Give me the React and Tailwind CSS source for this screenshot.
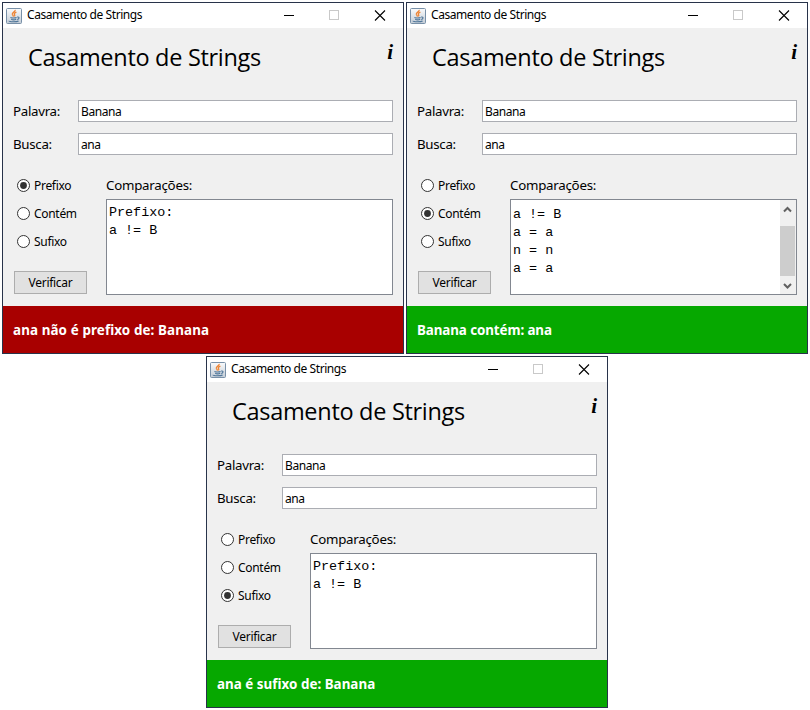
import React from "react";

function JavaIcon() {
  return (
    <svg width="16" height="16" viewBox="0 0 16 16" className="ml-[3px] shrink-0">
      <defs>
        <linearGradient id="tile" x1="0" y1="0" x2="0" y2="1">
          <stop offset="0" stopColor="#fafbfc" />
          <stop offset="1" stopColor="#c3ccd6" />
        </linearGradient>
      </defs>
      <rect x="0.5" y="0.5" width="15" height="15" rx="1" fill="url(#tile)" stroke="#7890a8" />
      <path d="M9.2 1.8C9.6 3.8 6 4.4 6.3 6.2C6.5 7 7.4 7.4 7.5 8.6M10.4 4.2C8.4 5 7.9 5.8 8.6 6.7C9 7.3 8.8 7.8 8.4 8.4" fill="none" stroke="#ee8535" strokeWidth="1.3" />
      <path d="M4.6 9.3C4.4 10.2 9.3 10.1 10.6 9.4M5.2 11.3C6.5 12 9 11.9 10.2 11.3M3 12.8C2.8 14.1 10.7 14.1 12.6 12.9M11.2 9.1C13.8 8.5 13.4 11 11.3 11.6" fill="none" stroke="#4f7699" strokeWidth="1.15" />
    </svg>
  );
}

function TitleBar() {
  return (
    <div className="flex h-[25px] shrink-0 items-center bg-white">
      <JavaIcon />
      <span className="-mt-px ml-[5px] text-[12px] leading-[16px] tracking-[-0.43px]">Casamento de Strings</span>
      <svg width="102" height="11" viewBox="0 0 102 11" className="mr-[17px] ml-auto" fill="none" shapeRendering="crispEdges">
        <path d="M0 5.5H10" stroke="#000" />
        <rect x="45.5" y="0.5" width="9" height="9" stroke="#c9c9c9" />
        <path d="M91 0.5L101 10.5M101 0.5L91 10.5" stroke="#000" shapeRendering="auto" strokeWidth="1.1" />
      </svg>
    </div>
  );
}

function Field({ label, value }) {
  return (
    <div className="flex h-[22px] items-center">
      <span className="w-[65px] text-[13.3px] leading-[18px] tracking-[-0.3px]">{label}</span>
      <div className="flex h-[22px] w-[315px] items-center border border-[#abadb3] bg-white pt-px pl-[2px] text-[12px] leading-[16px] tracking-[-0.4px]">
        {value}
      </div>
    </div>
  );
}

function Radio({ label, checked }) {
  return (
    <div className="flex h-[28px] items-center pl-1">
      <svg width="13" height="13" viewBox="0 0 13 13">
        <circle cx="6.5" cy="6.5" r="6" fill="#fff" stroke="#333" />
        {checked && <circle cx="6.5" cy="6.5" r="3.4" fill="#333" />}
      </svg>
      <span className="ml-1 pt-[2px] text-[12px] leading-[16px] tracking-[-0.3px]">{label}</span>
    </div>
  );
}

function ScrollBar() {
  return (
    <div className="flex w-4 flex-col bg-[#f0f0f0]">
      <svg width="16" height="26" viewBox="0 0 16 26" fill="none">
        <path d="M4 11.5L7.5 8L11 11.5" stroke="#606060" strokeWidth="2" />
      </svg>
      <div className="h-[50px] w-[15px] bg-[#cdcdcd]" />
      <svg width="16" height="18" viewBox="0 0 16 18" fill="none">
        <path d="M4 8L7.5 11.5L11 8" stroke="#606060" strokeWidth="2" />
      </svg>
    </div>
  );
}

function Window({ selected, lines, scrolled, status, statusClass }) {
  return (
    <section className="flex h-[352px] w-[402px] flex-col border border-[#28334a] bg-[#f0f0f0]">
      <TitleBar />
      <div className="flex h-[278px] flex-col pr-[10px] pl-[10px]">
        <header className="flex h-[72px] items-start justify-between">
          <h1 className="mt-[12px] ml-[15px] font-['Open_Sans','Noto_Sans',sans-serif] text-[23.5px] leading-[34px] font-normal tracking-[-0.3px]">Casamento de Strings</h1>
          <span className="mt-[11px] font-['Liberation_Serif',serif] text-[21px] leading-[26px] font-bold italic">i</span>
        </header>
        <Field label="Palavra:" value="Banana" />
        <div className="h-[11px]" />
        <Field label="Busca:" value="ana" />
        <div className="mt-[16px] flex">
          <div className="flex w-[93px] flex-col">
            <Radio label="Prefixo" checked={selected === 0} />
            <Radio label="Contém" checked={selected === 1} />
            <Radio label="Sufixo" checked={selected === 2} />
            <button className="mt-[16px] ml-px flex h-[23px] w-[73px] items-center justify-center border border-[#adadad] bg-[#e1e1e1] pt-px text-[12px] leading-[16px] tracking-[-0.3px]">
              Verificar
            </button>
          </div>
          <div className="flex flex-col">
            <div className="h-[28px] pt-[5px] text-[13.3px] leading-[18px] tracking-[-0.25px]">Comparações:</div>
            <div className="flex h-[96px] w-[287px] border border-[#828790] bg-white">
              <div className={`flex-1 pl-[2px] font-['Liberation_Mono',monospace] text-[13.4px] leading-[18px] whitespace-pre ${scrolled ? "pt-[6px]" : "pt-[4px]"}`}>
                {lines.map((line, i) => (
                  <div key={i}>{line}</div>
                ))}
              </div>
              {scrolled && <ScrollBar />}
            </div>
          </div>
        </div>
      </div>
      <footer className={`flex flex-1 items-center pl-[10px] text-[13.4px] leading-[18px] font-bold text-white ${statusClass}`}>
        {status}
      </footer>
    </section>
  );
}

export default function App() {
  return (
    <main className="flex h-[710px] w-[810px] flex-col items-center gap-[2px] overflow-hidden bg-white pt-[2px] font-['Noto_Sans',sans-serif] text-black">
      <div className="flex gap-[2px]">
        <Window selected={0} lines={["Prefixo:", "a != B"]} status="ana não é prefixo de: Banana" statusClass="bg-[#a80000] tracking-[0.11px]" />
        <Window selected={1} lines={["a != B", "a = a", "n = n", "a = a"]} scrolled status="Banana contém: ana" statusClass="bg-[#06a800] tracking-[-0.1px]" />
      </div>
      <div className="pl-[4px]">
        <Window selected={2} lines={["Prefixo:", "a != B"]} status="ana é sufixo de: Banana" statusClass="bg-[#06a800] tracking-[0.02px]" />
      </div>
    </main>
  );
}
